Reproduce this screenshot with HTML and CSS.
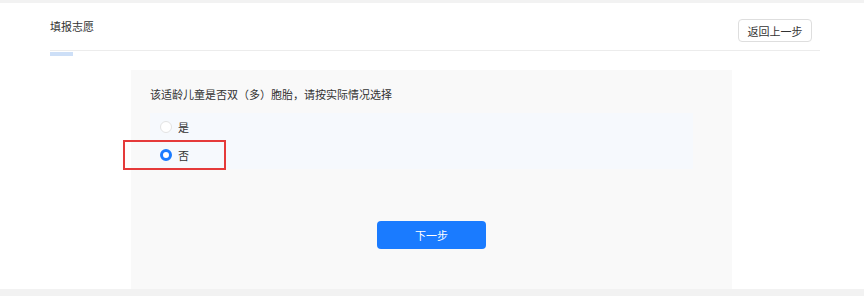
FILE: index.html
```html
<!DOCTYPE html>
<html lang="zh-CN">
<head>
<meta charset="utf-8">
<title>填报志愿</title>
<link rel="stylesheet" href="styles.css">
</head>
<body>
<div class="page">
  <div class="header">
    <div class="title">填报志愿</div>
    <button class="back-btn">返回上一步</button>
  </div>
  <div class="divider"><div class="tab-ink"></div></div>
  <div class="card">
    <div class="question">该适龄儿童是否双（多）胞胎，请按实际情况选择</div>
    <div class="options">
      <label class="option"><span class="radio"></span><span class="opt-text">是</span></label>
      <label class="option selected"><span class="radio checked"></span><span class="opt-text">否</span><span class="mark"></span></label>
    </div>
    <div class="actions">
      <button class="next-btn">下一步</button>
    </div>
  </div>
</div>
</body>
</html>
```

FILE: styles.css
```css
html, body {
  margin: 0;
  padding: 0;
  background: #f2f2f2;
  font-family: "Noto Sans CJK SC", "Noto Sans", sans-serif;
  color: #333;
}
.page {
  margin-top: 3px;
  height: 286px;
  background: #fff;
  padding: 0 44px 0 50px;
  box-sizing: border-box;
}
.header {
  display: flex;
  justify-content: space-between;
  align-items: flex-start;
  height: 47px;
}
.title {
  font-size: 11px;
  line-height: 16px;
  margin-top: 15px;
  color: #333;
}
.back-btn {
  margin-top: 16px;
  margin-right: 8px;
  width: 74px;
  height: 23px;
  border: 1px solid #dedede;
  border-radius: 4px;
  background: #fff;
  font-family: inherit;
  font-size: 11px;
  color: #333;
  padding: 0;
}
.divider {
  border-top: 1px solid #ececec;
}
.tab-ink {
  width: 23px;
  height: 4px;
  margin-top: 1px;
  background: #cddff7;
}
.card {
  margin: 14px 0 0 81px;
  width: 601px;
  height: 220px;
  background: #f9f9f9;
  box-sizing: border-box;
  padding: 16px 0 0 19px;
}
.question {
  font-size: 11px;
  line-height: 16px;
  color: #333;
}
.options {
  margin-top: 11px;
  width: 543px;
  background: #f6f9fd;
}
.option {
  position: relative;
  display: flex;
  align-items: center;
  height: 28px;
  padding-left: 10px;
  gap: 6px;
  font-size: 11px;
  color: #333;
}
.radio {
  width: 12px;
  height: 12px;
  box-sizing: border-box;
  border-radius: 50%;
  border: 1px solid #e3e3e3;
  background: #fff;
}
.radio.checked {
  border: 3.5px solid #1a7bff;
}
.mark {
  position: absolute;
  left: -27px;
  top: -1px;
  width: 103px;
  height: 30px;
  box-sizing: border-box;
  border: 2px solid #e53a3a;
}
.actions {
  display: flex;
  justify-content: center;
  margin-top: 52px;
  margin-left: -19px;
}
.next-btn {
  width: 109px;
  height: 28px;
  border: none;
  border-radius: 4px;
  background: #1a7bff;
  color: #fff;
  font-family: inherit;
  font-size: 11px;
  padding: 0;
}
```
